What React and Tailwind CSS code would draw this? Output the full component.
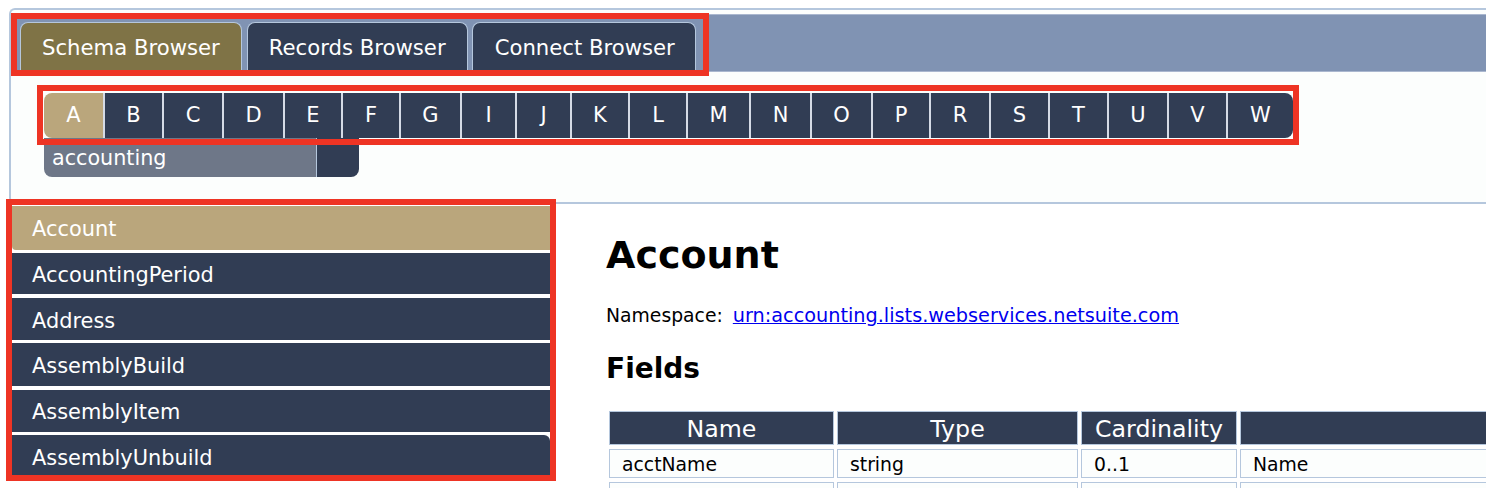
import React from 'react';

const tabs = ['Schema Browser', 'Records Browser', 'Connect Browser'];
const letters = ['A', 'B', 'C', 'D', 'E', 'F', 'G', 'I', 'J', 'K', 'L', 'M', 'N', 'O', 'P', 'R', 'S', 'T', 'U', 'V', 'W'];
const letterWidths = [61, 59, 60, 61, 58, 58, 61, 55, 55, 58, 58, 63, 61, 61, 58, 60, 59, 59, 60, 59, 65];
const types = ['Account', 'AccountingPeriod', 'Address', 'AssemblyBuild', 'AssemblyItem', 'AssemblyUnbuild'];
const itemSizes = ['h-[44px] mb-[3px] pt-[4px]', 'h-[41px] mb-[4px] pt-[4px]', 'h-[42px] mb-[3px] pt-[6px]', 'h-[43px] mb-[4px] pt-[4px]', 'h-[42px] mb-[3px] pt-[4px]', 'h-[40px] pt-[8px]'];

const App = () => {
  return (
    <div className="relative h-[488px] w-[1486px] overflow-hidden bg-white font-['DejaVu_Sans',sans-serif] text-black">
      <div className="ml-[9px] mt-2 h-[196px] w-[1500px] rounded-tl-md rounded-bl-md border-2 border-r-0 border-[#b5c7dd] bg-[#fcfefd] pt-1">
        <div className="flex h-[58px] gap-[5px] border-y border-[#aab7cf] bg-[#8093b3] pl-[9px] pt-[7px]">
          {tabs.map((tab, i) => (
            <div
              key={tab}
              className={`flex h-[50px] items-center rounded-t-lg border border-b-0 border-[#b5c7dd] text-[21.2px] text-white ${i === 0 ? 'bg-[#7f7346]' : 'bg-[#313d54]'} ${i === 2 ? '-ml-px pl-[22px] pr-[20px]' : 'px-[21px]'}`}
            >
              {tab}
            </div>
          ))}
        </div>
        <div className="ml-[33px] mt-[21px] flex h-[45px] w-fit overflow-hidden rounded-lg">
          {letters.map((l, i) => (
            <div
              key={l}
              style={{ width: letterWidths[i] }}
              className={`flex items-center justify-center border-r-2 border-[#d5dbe6] text-[21px] text-white last:border-r-0 ${i === 0 ? 'bg-[#baa67c]' : 'bg-[#313d54]'}`}
            >
              {l}
            </div>
          ))}
        </div>
        <div className="ml-[33px] flex h-[39px] w-[315px] overflow-hidden rounded-b-lg">
          <div className="flex w-[273px] items-center border-r border-[#b5c7dd] bg-[#6e7788] pl-2 pt-[3px] text-[20.7px] text-white">accounting</div>
          <div className="flex-1 bg-[#313d54]" />
        </div>
      </div>

      <div className="flex">
        <div className="ml-[12px] mt-[2px] flex w-[538px] shrink-0 flex-col">
          {types.map((t, i) => (
            <div
              key={t}
              className={`flex items-center pl-[20px] text-[20.9px] text-white ${itemSizes[i]} ${i === 0 ? 'rounded-bl-sm bg-[#baa67c]' : 'bg-[#313d54]'} ${i === 5 ? 'rounded-tr-md' : ''}`}
            >
              {t}
            </div>
          ))}
        </div>

        <div className="ml-[56px] flex-1">
          <h1 className="mt-[29px] text-[38px] font-bold leading-[44px]">Account</h1>
          <p className="mt-[27px] text-[18.8px] leading-[24px]">
            Namespace: <a href="#" className="ml-[4px] text-[19.25px] text-[#0000ee] underline">urn:accounting.lists.webservices.netsuite.com</a>
          </p>
          <h2 className="mt-[23px] text-[28px] font-bold leading-[36px]">Fields</h2>
          <table className="mt-[20px] w-[1000px] table-fixed border-separate border-spacing-x-[3px] border-spacing-y-[4px]">
            <colgroup>
              <col className="w-[225px]" />
              <col className="w-[241px]" />
              <col className="w-[156px]" />
              <col />
            </colgroup>
            <thead>
              <tr className="h-[34px] bg-[#313d54] text-[23.7px] leading-none text-white">
                {['Name', 'Type', 'Cardinality', ''].map((h, i) => (
                  <th key={i} className="border border-[#b5c7dd] p-0 pt-[3px] font-normal">{h}</th>
                ))}
              </tr>
            </thead>
            <tbody>
              {[['acctName', 'string', '0..1', 'Name'], ['acctNumber', 'string', '0..1', 'Number']].map((row) => (
                <tr key={row[0]} className="h-[29px] bg-[#fcfefd]">
                  {row.map((c) => (
                    <td key={c} className="border border-[#b5c7dd] px-3 pb-0 pt-[3px] text-[18.8px] leading-none">{c}</td>
                  ))}
                </tr>
              ))}
            </tbody>
          </table>
        </div>
      </div>

      <div className="absolute left-[11px] top-[13px] h-[63px] w-[698px] border-[6px] border-[#ee3424]" />
      <div className="absolute left-[37px] top-[85px] h-[60px] w-[1262px] border-[6px] border-[#ee3424]" />
      <div className="absolute left-[6px] top-[199px] h-[282px] w-[550px] border-[6px] border-[#ee3424]" />
    </div>
  );
};

export default App;
